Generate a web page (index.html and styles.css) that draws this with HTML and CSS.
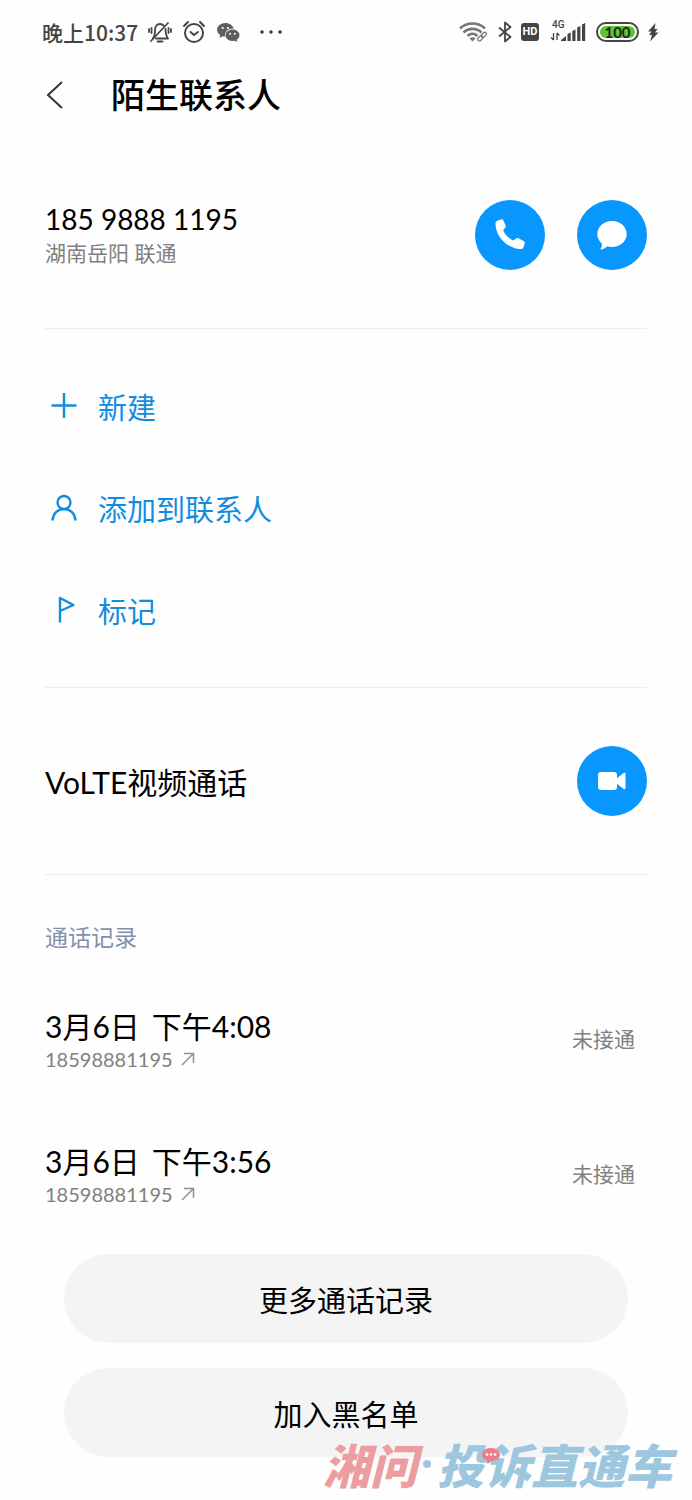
FILE: index.html
```html
<!DOCTYPE html>
<html lang="zh-CN">
<head>
<meta charset="utf-8">
<meta name="viewport" content="width=device-width, initial-scale=1">
<title>陌生联系人</title>
<link rel="stylesheet" href="styles.css">
</head>
<body>
<div class="page">
  <div class="status">
    <div class="status-left">
      <span class="clock">晚上10:37</span>
      <svg width="24" height="24" viewBox="0 0 24 24" fill="none" stroke="#444" stroke-width="1.8" stroke-linecap="round" stroke-linejoin="round"><path d="M3 21 20 3M5 18c2-2 2-4 2-8 0-4 2-6 5-6 2 0 3 .7 4 2M17.500 9c0 5 .5 7 2.500 9.500H8M9.500 21.500h5M3.500 8v5M1 9v3M20.500 8v5M23 9v3"/></svg>
      <svg width="24" height="24" viewBox="0 0 24 24" fill="none" stroke="#444" stroke-width="2" stroke-linecap="round" stroke-linejoin="round"><circle cx="12" cy="13" r="9"/><path d="m8.500 12 3.500 3 4-3M2 6l4-4M22 6l-4-4"/></svg>
      <svg width="24" height="24" viewBox="0 0 24 24"><path fill="#606060" d="M9.500 3C4.700 3 1 6 1 9.800c0 2.200 1.200 4.100 3.200 5.400L3.500 18l3.200-1.700 2.200.4C8.300 12 12 8.400 17.700 8.600 16.800 5.300 13.500 3 9.500 3Z"/><path fill="#606060" d="M16.500 9.600c-4 0-7 2.600-7 5.700s3 5.700 7 5.700l2.200-.3 2.700 1.400-.7-2.400c1.600-1 2.800-2.600 2.800-4.400 0-3.100-3-5.700-7-5.700Z"/><g fill="#fff"><circle cx="6.700" cy="8" r="1.100"/><circle cx="12" cy="8" r="1.100"/><circle cx="14.200" cy="13.700" r="1"/><circle cx="18.800" cy="13.700" r="1"/></g></svg>
      <svg class="more" width="24" height="24" viewBox="0 0 24 24" fill="#333"><circle cx="3" cy="12" r="1.700"/><circle cx="12" cy="12" r="1.700"/><circle cx="21" cy="12" r="1.700"/></svg>
    </div>
    <div class="status-right">
      <svg width="31" height="24" viewBox="0 0 31 24" fill="none" stroke="#777" stroke-width="2.600"><path d="M2 8.500c7-6.700 18-6.700 25 0M5.500 12.500c5-4.800 13-4.800 18 0M9.500 16c3-2.800 7-2.800 10 0"/><path d="M14.500 21.500 11.500 18.500c2-1.600 4-1.600 6 0Z" fill="#777" stroke="none"/><g stroke="#fefefe" stroke-width="4"><path d="m20 21 8-7"/></g><g stroke-width="1.300"><rect x="19.500" y="16.500" width="6" height="3.500" rx="1.700" transform="rotate(-45 22.500 18.500)"/><rect x="23" y="13" width="6" height="3.500" rx="1.700" transform="rotate(-45 26 15)"/></g></svg>
      <svg width="16" height="24" viewBox="0 0 16 24" fill="none" stroke="#444" stroke-width="1.800" stroke-linejoin="round"><path d="M2 7.500 13.500 17 8 21.500v-19L13.500 7 2 16.500"/></svg>
      <span class="hd">HD</span>
      <svg width="38" height="24" viewBox="0 0 38 24"><text x="2" y="8" class="net">4G</text><path d="M3.500 20v-7M7 13v7M1 17.500l2.500 2.500M7 13l2.300 2.500" fill="none" stroke="#444" stroke-width="1.300"/><path fill="#444" d="M11 21h5v-5l-5 4zM17.500 21h3.200v-8.500l-3.200 1.500zM22.300 21h3.200V9.500L22.300 11zM27.200 21h3.200v-15l-3.200 1.500zM32 21h3.200V3L32 4.500z"/></svg>
      <span class="battery"><span class="charge">100</span></span>
      <svg width="12" height="24" viewBox="0 0 12 24" fill="#444"><path d="M8.500 3 1 11.500h3.500L2 15h3l-2 6.500 8.500-9H8L10.500 9H7.500z"/></svg>
    </div>
  </div>

  <header class="header">
    <button class="back" aria-label="返回"><svg width="20" height="32" viewBox="0 0 20 32" fill="none" stroke="#333" stroke-width="2"><path d="M18 3 4 16l14 13"/></svg></button>
    <h1 class="title">陌生联系人</h1>
  </header>

  <main>
    <section class="contact">
      <div>
        <div class="number">185 9888 1195</div>
        <div class="sub">湖南岳阳 联通</div>
      </div>
      <div class="circles">
        <button class="circle" aria-label="拨打电话"><svg width="36" height="36" viewBox="0 0 34 34" fill="#fff"><path d="M5 3.500 8.500 2.300c1-.3 1.700 0 2.200 1l2.100 4.600c.4 1 .2 1.700-.5 2.400l-1.800 2c1.500 4.100 5.400 8 9.600 9.900l2.600-1.900c.8-.6 1.500-.7 2.400-.2l5 2.700c.9.500 1.200 1.200.8 2.200l-1.300 3.700c-.5 1.200-1.500 1.700-3 1.600C14.500 29.600 3.600 18.500 3.300 6.500 3.200 5 3.800 4 5 3.500Z"/></svg></button>
        <button class="circle" aria-label="发送短信"><svg width="34" height="34" viewBox="0 0 34 34" fill="#fff"><path d="M17 3C8.700 3 2.300 8.700 2.300 16c0 4.200 2 7.400 4.700 9.700.1 2.300-.6 4-1.700 5.800 3-.2 5.200-1.300 7-3.200 1.500.4 3 .6 4.700.6 8.400 0 14.700-5.600 14.700-12.900S25.400 3 17 3Z"/></svg></button>
      </div>
    </section>

    <section class="actions">
      <button class="action"><svg width="28" height="28" viewBox="0 0 28 28"><path d="M14 1v25M1.500 13.500h25"/></svg>新建</button>
      <button class="action"><svg width="28" height="28" viewBox="0 0 28 28"><circle cx="14" cy="8.500" r="6.500"/><path d="M2.500 26.500C3 19.500 7.500 15 14 15s11 4.500 11.500 11.500"/></svg>添加到联系人</button>
      <button class="action"><svg width="28" height="28" viewBox="0 0 28 28"><path d="M10 26.500V2l13.500 7L10 15"/></svg>标记</button>
    </section>

    <section class="video">
      <span>VoLTE视频通话</span>
      <button class="circle" aria-label="视频通话"><svg width="34" height="34" viewBox="0 0 34 34" fill="#fff"><rect x="3" y="8" width="19" height="18" rx="3"/><path d="m21 15 7-5.500c1.500-1.200 2.500-.8 2.500 1v13c0 1.800-1 2.200-2.500 1L21 19z"/></svg></button>
    </section>

    <section>
      <h2 class="log-title">通话记录</h2>
      <ul class="log">
        <li class="call">
          <div>
            <div class="when"><span>3月6日</span><span>下午4:08</span></div>
            <div class="phone">18598881195<svg width="14" height="14" viewBox="0 0 14 14"><path d="M1 13 12.500 1.500M3 1.500h9.500V11"/></svg></div>
          </div>
          <span class="state">未接通</span>
        </li>
        <li class="call">
          <div>
            <div class="when"><span>3月6日</span><span>下午3:56</span></div>
            <div class="phone">18598881195<svg width="14" height="14" viewBox="0 0 14 14"><path d="M1 13 12.500 1.500M3 1.500h9.500V11"/></svg></div>
          </div>
          <span class="state">未接通</span>
        </li>
      </ul>
      <div class="buttons">
        <button class="pill">更多通话记录</button>
        <button class="pill">加入黑名单</button>
      </div>
    </section>
  </main>

  <div class="watermark">
    <span class="mark-red">湘问</span><span class="mark-dot"></span><span class="mark-blue">投诉直通车</span>
    <svg class="bubble" width="20" height="18" viewBox="0 0 20 18"><path fill="#ec8088" d="M10 1C4.500 1 1 3.700 1 7.500c0 2.800 2 5 5 6L6.500 17l4-3c5-.2 8.500-2.800 8.500-6.500S15.500 1 10 1Z"/><g fill="#fff"><circle cx="6" cy="7.500" r="1.300"/><circle cx="10" cy="7.500" r="1.300"/><circle cx="14" cy="7.500" r="1.300"/></g></svg>
  </div>
</div>
</body>
</html>
```
FILE: styles.css
```css
* { box-sizing: border-box; }
body {
  margin: 0;
  background: #fefefe;
  color: #000;
  font-family: Lato, "Noto Sans CJK SC", sans-serif;
}
h1, h2, ul { margin: 0; padding: 0; font-weight: 400; list-style: none; }
button { border: 0; padding: 0; background: none; font: inherit; color: inherit; cursor: pointer; }
svg { display: block; flex: none; }

.page { position: relative; padding: 0 45px 42px; }

.status {
  display: flex;
  justify-content: space-between;
  align-items: center;
  height: 64px;
  margin: 0 -12px 0 -3px;
  color: #444;
}
.status-left, .status-right { display: flex; align-items: center; }
.status-left { gap: 10px; }
.status-right { gap: 8px; }
.clock { font: 500 21px/32px "Noto Sans CJK SC", sans-serif; }
.more { margin-left: 9px; }
.hd {
  width: 18px;
  margin-right: 3px;
  border-radius: 3px;
  background: #444;
  color: #fff;
  font: 700 11px/18px Roboto, sans-serif;
  text-align: center;
}
.net { font: 500 10px Roboto, sans-serif; fill: #444; }
.battery {
  width: 43px;
  padding: 2px;
  border: 2px solid #444;
  border-radius: 10px;
}
.charge {
  display: block;
  border-radius: 7px;
  background: #5fc52e;
  color: #222;
  font: 700 15px/12px Lato, sans-serif;
  text-align: center;
}

.header { display: flex; align-items: center; gap: 47px; height: 62px; }
.back { margin-left: -1px; }
.title { font-size: 34px; font-weight: 500; line-height: 48px; }

.contact, .video {
  display: flex;
  justify-content: space-between;
  align-items: center;
  border-bottom: 1px solid #ececec;
}
.contact { padding: 74px 0 58px; }
.number { font-size: 28px; line-height: 36px; }
.sub { font-size: 21px; line-height: 32px; color: #808080; }
.circles { display: flex; gap: 32px; }
.circle {
  display: grid;
  place-items: center;
  width: 70px;
  height: 70px;
  border-radius: 50%;
  background: #0797ff;
}

.actions { padding: 26px 0 26px; border-bottom: 1px solid #ececec; }
.action {
  display: flex;
  align-items: center;
  gap: 20px;
  width: 100%;
  height: 102px;
  padding-left: 5px;
  font-size: 29px;
  color: #118de0;
}
.action svg { fill: none; stroke: currentColor; stroke-width: 2.400; stroke-linejoin: round; }

.video { padding: 58px 0; font-size: 30px; }

.log-title { padding: 46px 0 20px; font-size: 23px; line-height: 32px; color: #8490ab; }
.call { display: flex; justify-content: space-between; align-items: center; height: 135px; padding-right: 12px; }
.when { display: flex; gap: 12px; font-size: 30px; line-height: 36px; }
.phone { display: flex; align-items: center; gap: 8px; font-size: 20px; line-height: 30px; color: #808080; }
.phone svg { fill: none; stroke: #909090; stroke-width: 1.500; }
.state { font-size: 21px; line-height: 32px; padding-bottom: 3px; color: #808080; }

.buttons { display: grid; gap: 25px; padding: 11px 19px 0; }
.pill { height: 89px; border-radius: 45px; background: #f4f4f4; font-size: 29px; }

.watermark {
  position: absolute;
  right: 20px;
  bottom: 11px;
  display: flex;
  align-items: center;
  font: italic 900 47px/48px "Noto Sans CJK SC", sans-serif;
}
.mark-red { color: #ec9da0; }
.mark-blue { color: #9dc6df; }
.mark-dot { width: 8px; height: 8px; margin: 0 6px; border-radius: 50%; background: #9dc6df; }
.bubble { position: absolute; left: 158px; top: 7px; }
```
